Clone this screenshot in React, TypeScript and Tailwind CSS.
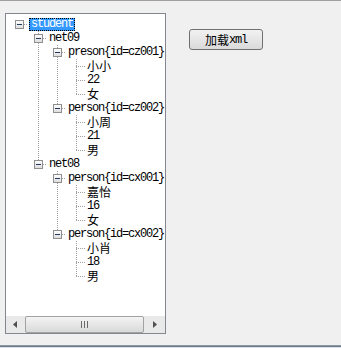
type Row = { label: string; level: number; open?: boolean; cjk?: boolean; selected?: boolean };

const rows: Row[] = [
  { label: "student", level: 0, open: true, selected: true },
  { label: "net09", level: 1, open: true },
  { label: "preson{id=cz001}", level: 2, open: true },
  { label: "小小", level: 3, cjk: true },
  { label: "22", level: 3 },
  { label: "女", level: 3, cjk: true },
  { label: "person{id=cz002}", level: 2, open: true },
  { label: "小周", level: 3, cjk: true },
  { label: "21", level: 3 },
  { label: "男", level: 3, cjk: true },
  { label: "net08", level: 1, open: true },
  { label: "person{id=cx001}", level: 2, open: true },
  { label: "嘉怡", level: 3, cjk: true },
  { label: "16", level: 3 },
  { label: "女", level: 3, cjk: true },
  { label: "person{id=cx002}", level: 2, open: true },
  { label: "小肖", level: 3, cjk: true },
  { label: "18", level: 3 },
  { label: "男", level: 3, cjk: true },
];

const indent = ["pl-[23px]", "pl-[42px]", "pl-[61px]", "pl-[80px]"];

const cx = (level: number) => 13 + 19 * level;
const cy = (i: number) => 10 + 14 * i;

function lastChild(i: number) {
  let last = -1;
  for (let j = i + 1; j < rows.length; j++) {
    if (rows[j].level <= rows[i].level) break;
    if (rows[j].level === rows[i].level + 1) last = j;
  }
  return last;
}

function TreeLines() {
  const dots = "#a0a0a0";
  return (
    <svg className="pointer-events-none absolute left-0 top-0" width="159" height="300" shapeRendering="crispEdges">
      <defs>
        <linearGradient id="box" x1="0" y1="0" x2="0" y2="1">
          <stop offset="0" stopColor="#ffffff" />
          <stop offset="1" stopColor="#dcdcdc" />
        </linearGradient>
      </defs>
      {rows.map((r, i) => {
        const q = r.open ? lastChild(i) : -1;
        if (q < 0) return null;
        const x = cx(r.level + 1) + 0.5;
        return (
          <line key={"v" + i} x1={x} x2={x} y1={cy(i) + 7} y2={cy(q) + 1} stroke={dots} strokeDasharray="1 1" />
        );
      })}
      {rows.map((r, i) => {
        const x = cx(r.level);
        const y = cy(i) + 0.5;
        return r.open ? (
          <line key={"h" + i} x1={x + 5} x2={x + 9} y1={y} y2={y} stroke={dots} strokeDasharray="1 1" />
        ) : (
          <line key={"h" + i} x1={x} x2={x + 9} y1={y} y2={y} stroke={dots} strokeDasharray="1 1" />
        );
      })}
      {rows.map((r, i) =>
        r.open ? (
          <g key={"b" + i}>
            <rect x={cx(r.level) - 3.5} y={cy(i) - 3.5} width="8" height="8" fill="url(#box)" stroke="#8f8f8f" />
            <line x1={cx(r.level) - 2} x2={cx(r.level) + 3} y1={cy(i) + 0.5} y2={cy(i) + 0.5} stroke="#1f3a5f" />
          </g>
        ) : null
      )}
    </svg>
  );
}

function ScrollBar() {
  return (
    <div className="flex h-[17px] bg-[#e9e9e9]">
      <div className="flex w-[19px] items-center justify-center">
        <svg width="5" height="7">
          <polygon points="4,0 4,7 0,3.5" fill="#505050" />
        </svg>
      </div>
      <div className="flex w-[119px] items-center justify-center rounded-[2px] border border-[#a2a2a2] bg-gradient-to-b from-[#f4f4f4] to-[#d9d9d9]">
        <div className="flex gap-[2px]">
          <div className="h-[7px] w-px bg-[#6a6a6a]" />
          <div className="h-[7px] w-px bg-[#6a6a6a]" />
          <div className="h-[7px] w-px bg-[#6a6a6a]" />
        </div>
      </div>
      <div className="flex w-[21px] items-center justify-center">
        <svg width="5" height="7">
          <polygon points="1,0 1,7 5,3.5" fill="#505050" />
        </svg>
      </div>
    </div>
  );
}

export default function App() {
  return (
    <div className="flex h-[348px] w-[341px] flex-col bg-[#f0f0f0] font-['Liberation_Mono',monospace] text-black">
      <div className="h-px bg-[#a0a0a0]" />
      <div className="flex flex-1 items-start pl-[5px] pt-[12px]">
        <div className="flex h-[321px] w-[161px] flex-col border border-[#828790] bg-white">
          <div className="relative flex-1 overflow-hidden pt-[3px]">
            <TreeLines />
            {rows.map((r, i) => (
              <div key={i} className={`flex h-[14px] items-center ${indent[r.level]}`}>
                {r.selected ? (
                  <span className="h-[13px] bg-[#3399ff] px-[2px] text-[12px] leading-[13px] tracking-[-1.2px] text-white outline outline-1 outline-dotted outline-black -outline-offset-1">
                    {r.label}
                  </span>
                ) : r.cjk ? (
                  <span className="px-[1px] font-['Noto_Sans_CJK_SC',sans-serif] text-[12px] leading-[14px]">{r.label}</span>
                ) : (
                  <span className="px-[1px] text-[12px] leading-[14px] tracking-[-1.2px]">{r.label}</span>
                )}
              </div>
            ))}
          </div>
          <ScrollBar />
        </div>
        <button className="ml-[23px] mt-[16px] flex h-[21px] w-[74px] items-center justify-center rounded-[3px] border border-[#707070] bg-gradient-to-b from-[#f2f2f2] to-[#dadada]">
          <span className="font-['Noto_Sans_CJK_SC',sans-serif] text-[12px] leading-[14px]">加载</span>
          <span className="text-[12px] leading-[14px] tracking-[-1.2px]">xml</span>
        </button>
      </div>
      <div className="h-px bg-[#8a97a5]" />
      <div className="h-px bg-[#6d7b8b]" />
      <div className="h-px bg-[#dfe3e8]" />
    </div>
  );
}
